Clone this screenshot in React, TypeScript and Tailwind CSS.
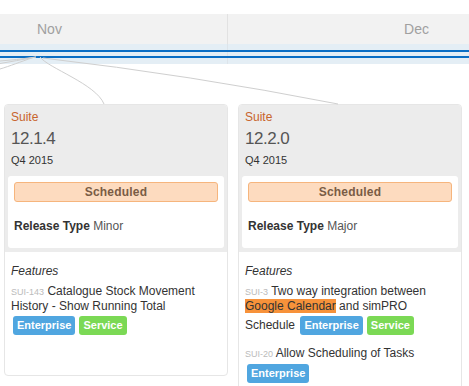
type Tag = "Enterprise" | "Service";

interface Feature {
  key: string;
  title: React.ReactNode;
  tags: Tag[];
}

interface Release {
  product: string;
  version: string;
  quarter: string;
  status: string;
  type: string;
  features: Feature[];
}

const releases: Release[] = [
  {
    product: "Suite",
    version: "12.1.4",
    quarter: "Q4 2015",
    status: "Scheduled",
    type: "Minor",
    features: [
      {
        key: "SUI-143",
        title: "Catalogue Stock Movement History - Show Running Total",
        tags: ["Enterprise", "Service"],
      },
    ],
  },
  {
    product: "Suite",
    version: "12.2.0",
    quarter: "Q4 2015",
    status: "Scheduled",
    type: "Major",
    features: [
      {
        key: "SUI-3",
        title: (
          <>
            Two way integration between <span className="bg-[#f7923a]">Google Calendar</span> and simPRO
            Schedule
          </>
        ),
        tags: ["Enterprise", "Service"],
      },
      {
        key: "SUI-20",
        title: "Allow Scheduling of Tasks",
        tags: ["Enterprise"],
      },
    ],
  },
];

function Badge({ tag }: { tag: Tag }) {
  return (
    <span
      className={
        "mx-[2px] my-[3px] inline-block h-[19px] rounded-[3px] px-[4px] align-middle text-[11px] font-bold leading-[19px] text-white " +
        (tag === "Enterprise" ? "bg-[#50a6e0]" : "bg-[#7bd955]")
      }
    >
      {tag}
    </span>
  );
}

function ReleaseCard({ r }: { r: Release }) {
  return (
    <div className="w-[224px] shrink-0 overflow-hidden rounded-[4px] border border-[#e6e6e6] bg-white">
      {/* 헤더 + 상태 */}
      <div className="bg-[#ececec] px-[3px] pb-[4px] pt-[5px]">
        <div className="px-[3px]">
          <div className="text-[12px] leading-[14px] text-[#c8642d]">{r.product}</div>
          <div className="mt-[5px] text-[17px] leading-[20px] tracking-[-0.5px] text-[#555]">{r.version}</div>
          <div className="mt-[5px] text-[11px] leading-[13px] text-[#333]">{r.quarter}</div>
        </div>
        <div className="mt-[9px] rounded-[3px] bg-white px-[6px] pb-[15px] pt-[6px]">
          <div className="h-[20px] rounded-[3px] border border-[#f6b57d] bg-[#fddbbf] text-center text-[12px] font-bold leading-[18px] tracking-[0.2px] text-[#7a5c45]">
            {r.status}
          </div>
          <div className="mt-[17px] text-[12px] leading-[14px] text-[#555]">
            <span className="font-bold text-[#333]">Release Type</span> {r.type}
          </div>
        </div>
      </div>

      {/* 기능 목록 */}
      <div className="min-h-[123px] px-[6px] pb-[8px] pt-[12px]">
        <div className="text-[12px] italic leading-[14px] text-[#333]">Features</div>
        {r.features.map((f, i) => (
          <div key={f.key} className={(i === 0 ? "mt-[6px]" : "mt-[8px]") + " text-[12px] leading-[14px] text-[#333]"}>
            <span className="text-[9px] text-[#bbb]">{f.key}</span> {f.title}{" "}
            {f.tags.map((t) => (
              <Badge key={t} tag={t} />
            ))}
          </div>
        ))}
      </div>
    </div>
  );
}

export default function App() {
  return (
    <div className="relative h-[386px] w-[469px] overflow-hidden bg-white font-['Liberation_Sans',Arial,sans-serif]">
      <div className="h-[14px]" />

      {/* 월 헤더 */}
      <div className="flex h-[30px] bg-[#f2f2f2] text-[14px] text-[#a0a0a0]">
        <div className="flex w-[228px] items-center border-r border-[#e2e2e2] pl-[37px]">Nov</div>
        <div className="flex flex-1 items-center justify-end pr-[40px]">Dec</div>
      </div>
      <div className="relative flex h-[20px] bg-[#e4eef5]">
        <div className="w-[228px] border-r border-[#dde4ea]" />
        <div className="absolute inset-x-0 top-[6px] h-[2px] bg-[#0b6ec4]" />
        <div className="absolute inset-x-0 top-[12px] h-[2px] bg-[#0b6ec4]" />
      </div>

      {/* 연결선 */}
      <svg className="pointer-events-none absolute left-0 top-0" width="469" height="386" fill="none" stroke="#cfcfcf" strokeWidth="1">
        <path d="M36 57 Q15 60 0 61" />
        <path d="M36 57 Q15 61 0 63.5" />
        <path d="M33 57.5 C20 62 10 66 0 69" />
        <path d="M40 57 C48 68 96 84 104 104" />
        <path d="M43 58 Q190 75 338 104" />
      </svg>

      {/* 릴리즈 카드 */}
      <div className="flex items-start gap-[10px] pl-[4px] pt-[40px]">
        {releases.map((r) => (
          <ReleaseCard key={r.version} r={r} />
        ))}
      </div>
    </div>
  );
}
